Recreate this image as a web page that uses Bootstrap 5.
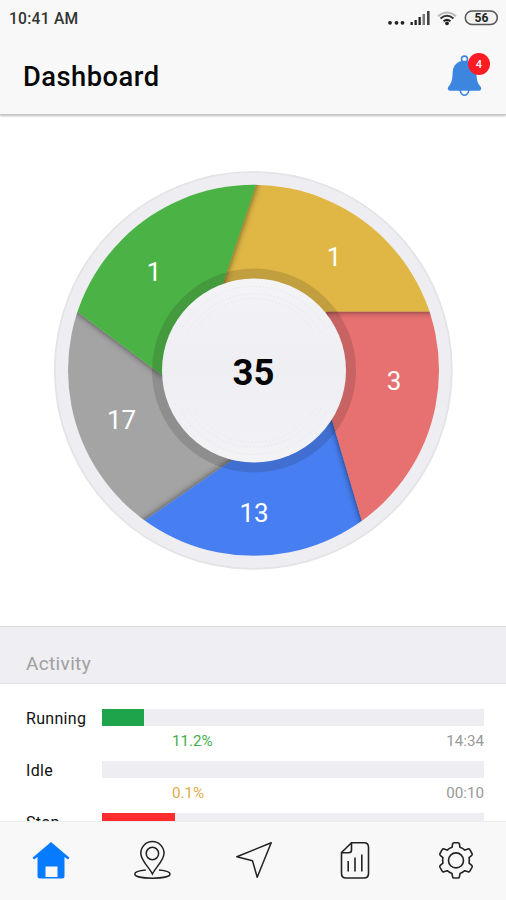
<!DOCTYPE html>
<html lang="en">
<head>
<meta charset="utf-8">
<meta name="viewport" content="width=device-width, initial-scale=1">
<title>Dashboard</title>
<link href="https://cdn.jsdelivr.net/npm/bootstrap@5.3.0/dist/css/bootstrap.min.css" rel="stylesheet">
<style>
body { font-family: Roboto, "Liberation Sans", sans-serif; color: #111; }
.screen { height: 900px; }
.app-header { background: #f8f8f8; height: 115px; border-bottom: 1px solid #c6c6c6; box-shadow: 0 1px 2px rgba(0,0,0,.28); z-index: 1; }
.status { height: 37px; padding: 0 8px 0 9px; font-size: 15.6px; font-weight: 500; color: #333; letter-spacing: .25px; }
.status span { padding-top: 2px; }
.status svg { letter-spacing: 0; }
.status svg, .bell, .tab svg { display: block; }
.title-bar { height: 78px; padding: 0 15px 0 23px; }
.title-bar h1 { font-size: 27.3px; font-weight: 500; letter-spacing: .5px; line-height: 32px; color: #080808; padding-top: 1px; }
.chart { height: 511px; }
.chart svg { display: block; }
.section-head { height: 58px; background: #eeeef3; border-top: 1px solid #dcdcdf; border-bottom: 1px solid #dfdfe2; padding: 19px 26px 0; font-size: 19px; color: #a0a0a0; letter-spacing: .35px; }
.activity { padding: 24px 22px 0 26px; }
.activity-row { height: 52px; }
.activity-name { width: 76px; font-size: 16px; line-height: 21px; letter-spacing: .3px; }
.track { height: 17px; background: #eeeef2; border-radius: 0; margin-top: 1px; }
.track .progress-bar { background: #1ea54b; }
.track .bar-stop { background: #ff2d2d; }
.figures { font-size: 15.2px; line-height: 18px; padding: 6px 0 0 70px; color: #999; }
.pct-run { color: #3fae49; }
.pct-idle { color: #dcac48; }
.tabs { height: 79px; background: #f8f8f8; border-top: 1px solid #ececec; }
.tab { padding: 0 0 2px 1px; }
</style>
<script src="https://cdn.jsdelivr.net/npm/bootstrap@5.3.0/dist/js/bootstrap.bundle.min.js"></script>
</head>
<body class="bg-white">
<div class="screen d-flex flex-column overflow-hidden">
  <header class="app-header flex-shrink-0 position-relative">
    <div class="status d-flex align-items-center justify-content-between">
      <span>10:41 AM</span>
      <svg width="112" height="20" viewBox="386 9 112 20" role="img" aria-label="Signal, Wi-Fi, battery">
        <g fill="#222"><circle cx="390" cy="22.800" r="1.900"/><circle cx="396.500" cy="22.800" r="1.900"/><circle cx="402.500" cy="22.800" r="1.900"/>
        <path d="M410.500 22h2.300v3h-2.300zM414.500 20h2.300v5h-2.300zM418.500 17h2.300v8h-2.300z"/>
        <path d="M422.500 14h2.500v11h-2.500z" fill="#777"/><path d="M427 11h2.600v14H427z" fill="#444"/></g>
        <g fill="none" stroke-width="2.100"><path d="M438 16.200Q447 8.800 456 16.200" stroke="#bbb"/><path d="M440.500 18.500Q447 13 453.500 18.500" stroke="#333"/><path d="M443.500 21.300Q447 18.500 450.500 21.300" stroke="#222"/></g>
        <circle cx="447" cy="23.300" r="1.900" fill="#222"/>
        <rect x="465.300" y="11" width="32" height="13.500" rx="6.700" fill="#f2f2f2" stroke="#555" stroke-width="1.500"/>
        <text x="481.400" y="22.200" text-anchor="middle" font-size="12" font-weight="700" fill="#222">56</text>
      </svg>
    </div>
    <div class="title-bar d-flex align-items-center justify-content-between">
      <h1 class="m-0">Dashboard</h1>
      <svg class="bell" width="46" height="46" viewBox="445 52.500 46 46" role="img" aria-label="4 notifications">
        <circle cx="464.500" cy="58.600" r="3" fill="#f8f8f8" stroke="#3d86df" stroke-width="1.600"/>
        <path d="M459.800 89q1.500 5.800 4.700 5.800t4.700-5.800" fill="#f8f8f8" stroke="#3d86df" stroke-width="1.500"/>
        <path d="M464.500 60.200C457.500 60.200 453 65 452.700 71.500C452.300 80 451.500 82.500 448.800 85.700C446.800 88 448 90.200 450.300 90.200H478.700C481 90.200 482.200 88 480.200 85.700C477.500 82.500 476.700 80 476.300 71.500C476 65 471.500 60.200 464.500 60.200Z" fill="#3d86df"/>
        <circle cx="479" cy="63.500" r="11" fill="#fc1d24"/>
        <text x="479" y="67.500" text-anchor="middle" font-size="11" font-weight="500" fill="#fff">4</text>
      </svg>
    </div>
  </header>

  <main class="flex-grow-1 overflow-hidden">
    <section class="chart">
      <svg width="506" height="511" viewBox="0 115 506 511" role="img" aria-label="Vehicle status, 35 in total">
        <defs>
          <clipPath id="disc"><circle cx="253.500" cy="370.300" r="185.500"/></clipPath>
          <filter id="edge" x="-10%" y="-10%" width="120%" height="120%"><feDropShadow dx="0" dy="0" stdDeviation="3.500" flood-color="#000" flood-opacity=".62"/></filter>
          <linearGradient id="hub" x1="0" y1="0" x2="0" y2="1"><stop offset="0" stop-color="#f4f4f7"/><stop offset=".5" stop-color="#eeeef3"/><stop offset="1" stop-color="#f3f3f6"/></linearGradient>
        </defs>
        <circle cx="253.300" cy="370.300" r="198.500" fill="#eeeef2" stroke="#e4e4e7" stroke-width="1.800"/>
        <g clip-path="url(#disc)">
          <path d="M39 283L162 375L253 370L231 461L93 556H39Z" fill="#a4a4a4"/>
          <path d="M93 556L231 461L253 370L332 420L374 562L250 600Z" fill="#467ff3" filter="url(#edge)"/>
          <path d="M480 311.500H327L253 370L332 420L374 562L480 520Z" fill="#e76f70" filter="url(#edge)"/>
          <path d="M269 146L223 283L253 370L327 311.500H480L450 150Z" fill="#e0b745" filter="url(#edge)"/>
          <path d="M39 283L162 375L253 370L223 283L269 146H39Z" fill="#4bb344" filter="url(#edge)"/>
          <circle cx="254" cy="370.500" r="102" fill="#222" fill-opacity=".16"/>
        </g>
        <circle cx="254" cy="370.500" r="92" fill="url(#hub)"/>
        <g fill="none" stroke="#dedee4" stroke-width=".8" stroke-dasharray="1.500 2" opacity=".75">
          <path d="M187 333A77 77 0 0 1 321 333M181 330A83 83 0 0 1 327 330M195 330A71 71 0 0 1 313 330"/>
          <path d="M187 408A77 77 0 0 0 321 408M181 411A83 83 0 0 0 327 411M195 411A71 71 0 0 0 313 411"/>
        </g>
        <g fill="#fff" font-size="26" text-anchor="middle">
          <text x="154" y="281">1</text><text x="334" y="266">1</text><text x="394" y="390">3</text><text x="254" y="522">13</text><text x="121.500" y="429">17</text>
        </g>
        <text x="253.500" y="384.500" font-size="36.500" font-weight="700" text-anchor="middle" fill="#050505">35</text>
      </svg>
    </section>

    <section>
      <div class="section-head d-flex align-items-center"><span>Activity</span></div>
      <div class="activity">
        <div class="activity-row d-flex">
          <div class="activity-name flex-shrink-0">Running</div>
          <div class="flex-grow-1">
            <div class="progress track"><div class="progress-bar" style="width:11%"></div></div>
            <div class="figures d-flex justify-content-between"><span class="pct-run">11.2%</span><span>14:34</span></div>
          </div>
        </div>
        <div class="activity-row d-flex">
          <div class="activity-name flex-shrink-0">Idle</div>
          <div class="flex-grow-1">
            <div class="progress track"><div class="progress-bar" style="width:0%"></div></div>
            <div class="figures d-flex justify-content-between"><span class="pct-idle">0.1%</span><span>00:10</span></div>
          </div>
        </div>
        <div class="activity-row d-flex">
          <div class="activity-name flex-shrink-0">Stop</div>
          <div class="flex-grow-1">
            <div class="progress track"><div class="progress-bar bar-stop" style="width:19%"></div></div>
          </div>
        </div>
      </div>
    </section>
  </main>

  <nav class="tabs nav nav-fill flex-nowrap flex-shrink-0 align-items-center">
    <a class="tab nav-item d-flex justify-content-center" href="#" aria-label="Home">
      <svg width="40" height="40" viewBox="0 0 40 40"><path d="M20 2L38.500 17.700L37 19.500L33.500 17V36Q33.500 38.500 31 38.500H9Q6.500 38.500 6.500 36V17L3 19.500L1.500 17.700Z" fill="#067bff"/><path d="M14.500 26.500h12v10.500h-12z" fill="#f8f8f8"/></svg>
    </a>
    <a class="tab nav-item d-flex justify-content-center" href="#" aria-label="Map">
      <svg width="40" height="40" viewBox="0 0 40 40" fill="none" stroke="#222" stroke-width="1.500"><path d="M20.400 34C17 27 8.800 20.500 8.800 13.200A11.600 11.600 0 0 1 32 13.200C32 20.500 23.800 27 20.400 34Z"/><circle cx="20.400" cy="13.500" r="6.200"/><path d="M13.800 29.900C7 30.400 2.800 32 2.800 34C2.800 36.600 10.500 38.200 20.400 38.200S38 36.600 38 34C38 32 33.800 30.400 27 29.900"/></svg>
    </a>
    <a class="tab nav-item d-flex justify-content-center" href="#" aria-label="Navigate">
      <svg width="40" height="40" viewBox="0 0 40 40" fill="none" stroke="#222" stroke-width="1.500" stroke-linejoin="round"><path d="M37.200 2.800L2.800 16.700L18.500 20.700L23.200 37.200Z"/></svg>
    </a>
    <a class="tab nav-item d-flex justify-content-center" href="#" aria-label="Reports">
      <svg width="40" height="40" viewBox="0 0 40 40" fill="none" stroke="#222" stroke-width="1.600"><path d="M16.500 2.700H29Q33.500 2.700 33.500 7.200V33.500Q33.500 38 29 38H11Q6.500 38 6.500 33.500V12.500ZM16.500 2.700V10Q16.500 12.700 13.800 12.700H6.500"/><path d="M13.200 21v10.500M20 17.500v14M26.800 14.500v17"/></svg>
    </a>
    <a class="tab nav-item d-flex justify-content-center" href="#" aria-label="Settings">
      <svg width="40" height="40" viewBox="0 0 40 40" fill="none" stroke="#222" stroke-width="1.600" stroke-linejoin="round"><path d="M18 2.800H22Q23.200 2.800 23.400 4L24 7.300Q26.600 8.200 28.800 10.100L32 9Q33.200 8.600 33.800 9.700L36 13.500Q36.600 14.600 35.700 15.400L33.100 17.600Q33.600 20.400 33.100 23.200L35.700 25.400Q36.600 26.200 36 27.300L33.800 31.100Q33.200 32.200 32 31.800L28.800 30.700Q26.600 32.600 24 33.500L23.400 36.800Q23.200 38 22 38H18Q16.800 38 16.600 36.800L16 33.500Q13.400 32.600 11.200 30.700L8 31.800Q6.800 32.200 6.200 31.100L4 27.300Q3.400 26.200 4.300 25.400L6.900 23.200Q6.400 20.400 6.900 17.600L4.300 15.400Q3.400 14.600 4 13.500L6.200 9.700Q6.800 8.600 8 9L11.200 10.100Q13.400 8.200 16 7.300L16.600 4Q16.800 2.800 18 2.800Z"/><circle cx="20" cy="20.400" r="7.500"/></svg>
    </a>
  </nav>
</div>
</body>
</html>
